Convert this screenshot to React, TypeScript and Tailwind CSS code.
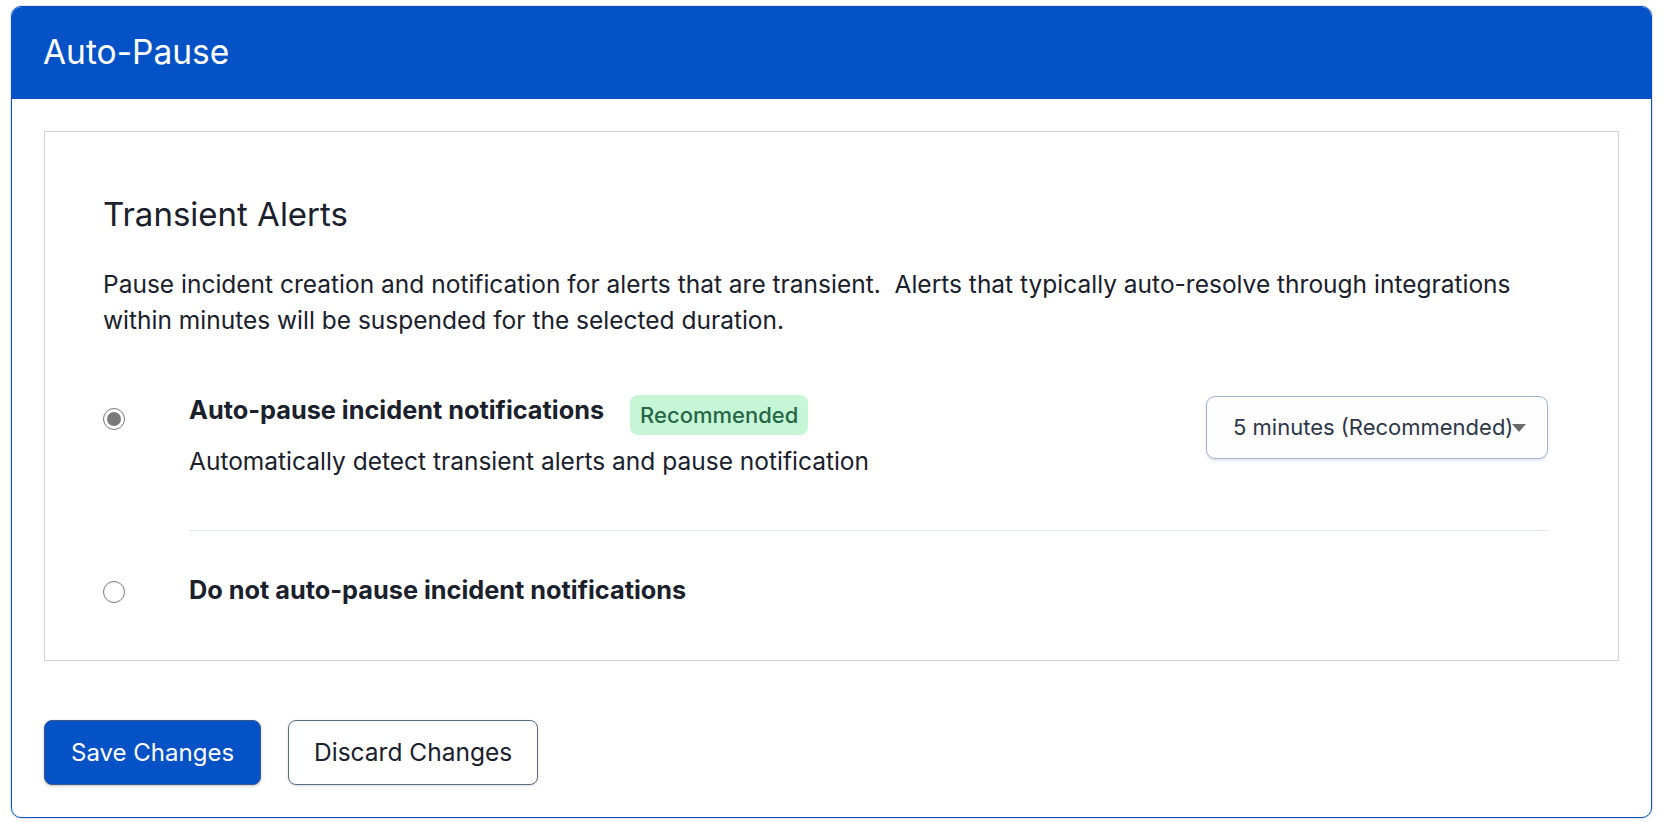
import { useState } from "react";

function Radio({ checked, onClick }: { checked: boolean; onClick: () => void }) {
  return (
    <button
      type="button"
      onClick={onClick}
      className="w-[22px] h-[22px] rounded-full border-[1.5px] border-[#7a7a7a] bg-white flex items-center justify-center shrink-0"
    >
      {checked && <span className="w-[14px] h-[14px] rounded-full bg-[#7a7a7a]" />}
    </button>
  );
}

function App() {
  const [mode, setMode] = useState<"auto" | "off">("auto");

  return (
    <div className="min-h-screen bg-white pt-[6px] pl-[11px] pr-[14px] font-['Inter',sans-serif] text-[#1a202c]">
      <div className="rounded-[10px] border border-[#0452c6] shadow-[0_0_0_1px_#e3e6ea] overflow-hidden">
        <div className="bg-[#0452c6] h-[92px] flex items-center px-[31px]">
          <h1 className="text-white text-[33.5px] leading-none">Auto-Pause</h1>
        </div>

        <div className="px-[32px] pt-[32px] pb-[32px]">
          <div className="border border-[#cbd5e0] pl-[58px] pr-[70px] pt-[64px] pb-[55px]">
            <h2 className="text-[33px] leading-[36px]">Transient Alerts</h2>
            <p className="mt-[34px] text-[24.5px] leading-[36px] whitespace-pre-wrap">
              {"Pause incident creation and notification for alerts that are transient.  Alerts that typically auto-resolve through integrations\nwithin minutes will be suspended for the selected duration."}
            </p>

            <div className="mt-[57px] flex">
              <div className="w-[86px] pt-[13px]">
                <Radio checked={mode === "auto"} onClick={() => setMode("auto")} />
              </div>
              <div className="flex-1">
                <div className="flex items-start justify-between">
                  <div>
                    <div className="flex items-start h-[40px]">
                      <span className="text-[25.3px] leading-[30px] font-bold">
                        Auto-pause incident notifications
                      </span>
                      <span className="ml-[26px] h-[40px] px-[10px] rounded-[8px] bg-[#c6f6d5] text-[#276749] text-[22px] font-medium flex items-center">
                        Recommended
                      </span>
                    </div>
                    <p className="mt-[11px] text-[24.5px] leading-[30px]">
                      Automatically detect transient alerts and pause notification
                    </p>
                  </div>
                  <button
                    type="button"
                    className="mt-[1px] w-[342px] h-[63px] rounded-[9px] border border-[#a3b3cc] bg-[#fdfdfd] shadow-[0_2px_3px_rgba(100,130,180,0.2)] flex items-center pl-[26px] text-[22px] text-[#2d3748]"
                  >
                    <span>5 minutes (Recommended)</span>
                    <svg width="16" height="10" viewBox="0 0 16 10" className="ml-[-2px]">
                      <path d="M1 1 L15 1 L8 9 Z" fill="#6b6b6b" />
                    </svg>
                  </button>
                </div>
                <div className="mt-[54px] border-t border-[#e2e8f0]" />
              </div>
            </div>

            <div className="mt-[44px] flex">
              <div className="w-[86px] pt-[6px]">
                <Radio checked={mode === "off"} onClick={() => setMode("off")} />
              </div>
              <span className="text-[25.3px] leading-[30px] font-bold">
                Do not auto-pause incident notifications
              </span>
            </div>
          </div>

          <div className="mt-[59px] flex gap-[27px]">
            <button className="h-[65px] px-[26px] rounded-[8px] bg-[#0452c6] border border-[#3a5a8a] text-white text-[24px] shadow-[0_1px_3px_rgba(0,0,0,0.25)]">
              Save Changes
            </button>
            <button className="h-[65px] px-[25px] rounded-[8px] bg-white border border-[#5a6b85] text-[#1a202c] text-[24.5px] shadow-[0_1px_3px_rgba(0,0,0,0.15)]">
              Discard Changes
            </button>
          </div>
        </div>
      </div>
    </div>
  );
}

export default App;
